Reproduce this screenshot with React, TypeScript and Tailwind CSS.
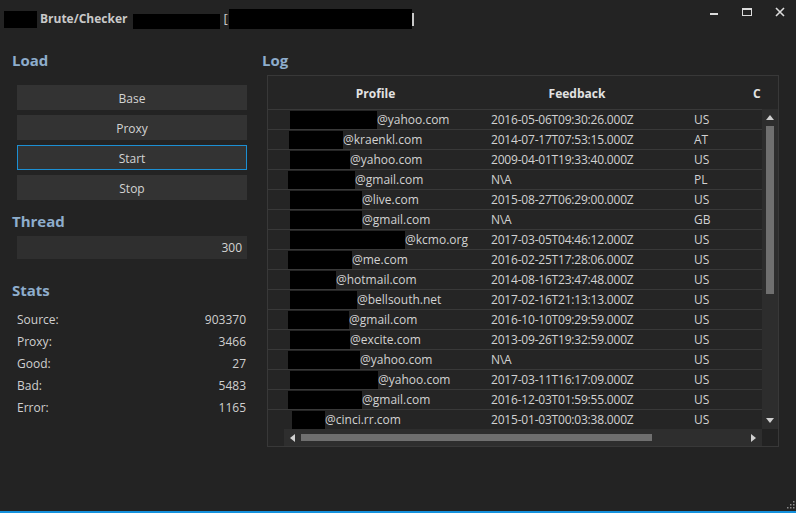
import React from "react";

const rows: [number, number, string, string, string][] = [
  [22, 87, "@yahoo.com", "2016-05-06T09:30:26.000Z", "US"],
  [21, 54, "@kraenkl.com", "2014-07-17T07:53:15.000Z", "AT"],
  [22, 60, "@yahoo.com", "2009-04-01T19:33:40.000Z", "US"],
  [20, 67, "@gmail.com", "N\\A", "PL"],
  [22, 72, "@live.com", "2015-08-27T06:29:00.000Z", "US"],
  [22, 72, "@gmail.com", "N\\A", "GB"],
  [22, 115, "@kcmo.org", "2017-03-05T04:46:12.000Z", "US"],
  [20, 64, "@me.com", "2016-02-25T17:28:06.000Z", "US"],
  [22, 46, "@hotmail.com", "2014-08-16T23:47:48.000Z", "US"],
  [22, 67, "@bellsouth.net", "2017-02-16T21:13:13.000Z", "US"],
  [20, 61, "@gmail.com", "2016-10-10T09:29:59.000Z", "US"],
  [22, 60, "@excite.com", "2013-09-26T19:32:59.000Z", "US"],
  [20, 72, "@yahoo.com", "N\\A", "US"],
  [22, 88, "@yahoo.com", "2017-03-11T16:17:09.000Z", "US"],
  [20, 74, "@gmail.com", "2016-12-03T01:59:55.000Z", "US"],
  [24, 33, "@cinci.rr.com", "2015-01-03T00:03:38.000Z", "US"],
];

const stats: [string, string][] = [
  ["Source:", "903370"],
  ["Proxy:", "3466"],
  ["Good:", "27"],
  ["Bad:", "5483"],
  ["Error:", "1165"],
];

const SectionTitle = ({ children }: { children: React.ReactNode }) => (
  <h3 className="h-5 text-[15px] font-bold leading-5 text-[#8eadcc]">{children}</h3>
);

const Btn = ({ label, active }: { label: string; active?: boolean }) => (
  <div
    className={`flex h-[25px] items-center justify-center bg-[#333333] pt-[2px] text-[12px] text-[#d4d4d4] ${
      active ? "border border-[#1c8fd3]" : ""
    }`}
  >
    {label}
  </div>
);

export default function App() {
  return (
    <div className="relative flex h-[513px] w-[796px] flex-col overflow-hidden border-b-2 border-[#1591dc] bg-[#232323] font-['Open_Sans','Noto_Sans',sans-serif] text-[#d6d6d6]">
      {/* title bar */}
      <div className="flex h-[38px] items-center pl-1">
        <div className="h-[17px] w-[33px] bg-black" />
        <span className="ml-[3px] text-[12px] font-bold text-[#c9c9c9]">Brute/Checker</span>
        <div className="ml-[6px] mt-[4px] h-[15px] w-[87px] bg-black" />
        <span className="ml-[3px] text-[13px] text-[#c9c9c9]">[</span>
        <div className="ml-[1px] h-[20px] w-[183px] bg-black" />
        <div className="h-[13px] w-[2px] bg-[#c9c9c9]" />
        <div className="ml-auto flex h-full items-start pt-[7px]">
          <div className="flex w-[33px] justify-center pt-[6px]">
            <div className="h-[2px] w-[8px] bg-[#dcdcdc]" />
          </div>
          <div className="flex w-[33px] justify-center pt-[1px]">
            <div className="h-[8px] w-[10px] border border-t-2 border-[#dcdcdc]" />
          </div>
          <div className="flex w-[33px] justify-center">
            <svg width="10" height="10" viewBox="0 0 10 10">
              <path d="M1 1L9 9M9 1L1 9" stroke="#dcdcdc" strokeWidth="1.6" />
            </svg>
          </div>
        </div>
      </div>

      <div className="flex flex-1 pt-3">
        {/* left */}
        <div className="ml-3 flex w-[235px] flex-col">
          <SectionTitle>Load</SectionTitle>
          <div className="ml-[5px] mt-[15px] flex flex-col gap-[5px]">
            <Btn label="Base" />
            <Btn label="Proxy" />
            <Btn label="Start" active />
            <Btn label="Stop" />
          </div>
          <div className="mt-[11px]">
            <SectionTitle>Thread</SectionTitle>
          </div>
          <div className="ml-[5px] mt-[5px] flex h-[23px] items-center justify-end bg-[#2f2f2f] pr-[5px] text-[12px] text-[#d4d4d4]">
            300
          </div>
          <div className="mt-[21px]">
            <SectionTitle>Stats</SectionTitle>
          </div>
          <div className="ml-[5px] mr-[1px] mt-[9px] flex flex-col">
            {stats.map(([k, v]) => (
              <div key={k} className="flex h-[22px] items-center justify-between text-[12px] text-[#d0d0d0]">
                <span>{k}</span>
                <span>{v}</span>
              </div>
            ))}
          </div>
        </div>

        {/* right */}
        <div className="ml-[15px] flex flex-col">
          <SectionTitle>Log</SectionTitle>
          <div className="ml-[5px] mt-[5px] flex h-[372px] w-[512px] flex-col border border-[#383838] bg-[#252525]">
            <div className="flex h-[33px] shrink-0 items-center overflow-hidden pt-[2px] text-[12px] font-bold text-[#e2e2e2]">
              <div className="w-[215px] shrink-0 text-center">Profile</div>
              <div className="w-[188px] shrink-0 text-center">Feedback</div>
              <div className="shrink-0 pl-[82px]">C</div>
            </div>
            <div className="flex h-[320px] shrink-0">
              <div className="flex w-[494px] flex-col overflow-hidden">
                {rows.map(([pl, w, mail, fb, c], i) => (
                  <div key={i} className="flex h-[20px] shrink-0 items-center border-t border-[#393939] text-[12px] text-[#d2d2d2]">
                    <div className="flex w-[223px] shrink-0 items-center" style={{ paddingLeft: pl }}>
                      <div className="h-[18px] bg-black" style={{ width: w }} />
                      <span>{mail}</span>
                    </div>
                    <div className="w-[203px] shrink-0 tracking-[-0.2px]">{fb}</div>
                    <div>{c}</div>
                  </div>
                ))}
              </div>
              <div className="flex w-[16px] flex-col items-center bg-[#2d2d2d]">
                <div className="flex h-[17px] items-center justify-center">
                  <svg width="8" height="5" viewBox="0 0 8 5"><path d="M0 5L4 0L8 5Z" fill="#cfcfcf" /></svg>
                </div>
                <div className="h-[168px] w-[8px] bg-[#6f6f6f]" />
                <div className="flex-1" />
                <div className="flex h-[17px] items-center justify-center">
                  <svg width="8" height="5" viewBox="0 0 8 5"><path d="M0 0L8 0L4 5Z" fill="#cfcfcf" /></svg>
                </div>
              </div>
            </div>
            <div className="flex h-[17px] shrink-0">
              <div className="w-[16px] bg-[#252525]" />
              <div className="flex flex-1 items-center bg-[#2e2e2e]">
                <div className="flex w-[17px] justify-center">
                  <svg width="5" height="8" viewBox="0 0 5 8"><path d="M5 0L0 4L5 8Z" fill="#cfcfcf" /></svg>
                </div>
                <div className="h-[7px] w-[351px] bg-[#6f6f6f]" />
                <div className="flex-1" />
                <div className="flex w-[17px] justify-center">
                  <svg width="5" height="8" viewBox="0 0 5 8"><path d="M0 0L5 4L0 8Z" fill="#cfcfcf" /></svg>
                </div>
              </div>
              <div className="w-[16px] bg-[#222222]" />
            </div>
          </div>
        </div>
      </div>

      {/* resize grip */}
      <svg className="absolute bottom-[2px] right-[1px]" width="10" height="10" viewBox="0 0 10 10">
        <rect x="8" y="2" width="1.5" height="1.5" fill="#8a8a8a" />
        <rect x="5" y="5" width="1.5" height="1.5" fill="#8a8a8a" />
        <rect x="8" y="5" width="1.5" height="1.5" fill="#8a8a8a" />
        <rect x="2" y="8" width="1.5" height="1.5" fill="#8a8a8a" />
        <rect x="5" y="8" width="1.5" height="1.5" fill="#8a8a8a" />
        <rect x="8" y="8" width="1.5" height="1.5" fill="#8a8a8a" />
      </svg>
    </div>
  );
}
